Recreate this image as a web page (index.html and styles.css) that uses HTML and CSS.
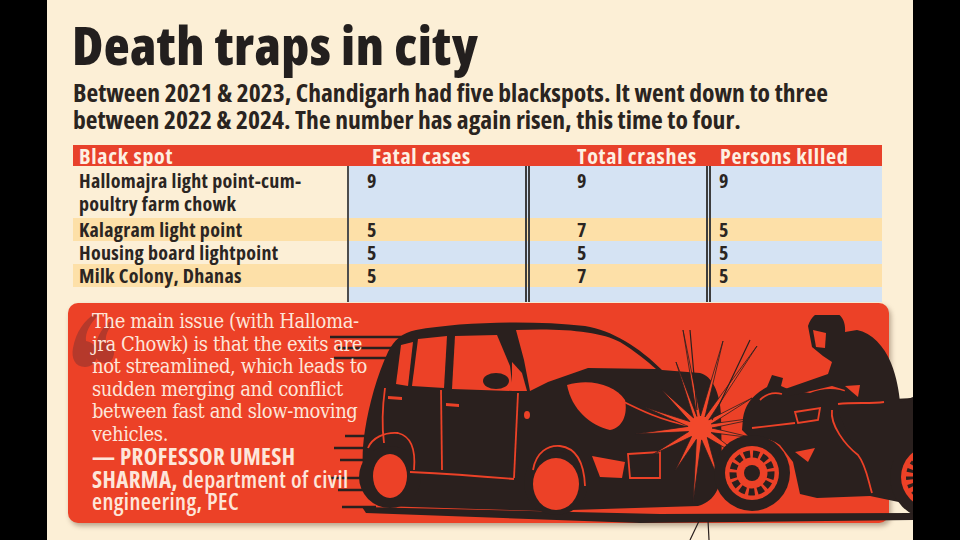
FILE: index.html
```html
<!DOCTYPE html>
<html lang="en">
<head>
<meta charset="utf-8">
<title>Death traps in city</title>
<link rel="stylesheet" href="styles.css">
</head>
<body>
<div class="frame">
  <div class="bar"></div>
  <main class="page">
    <h1 class="title">Death traps in city</h1>
    <p class="dek">Between 2021 &amp; 2023, Chandigarh had five blackspots. It went down to three<br>between 2022 &amp; 2024. The number has again risen, this time to four.</p>
    <div class="table">
      <div class="row head">
        <div class="c c1">Black spot</div>
        <div class="c c2">Fatal cases</div>
        <div class="c c3">Total crashes</div>
        <div class="c c4">Persons kIlled</div>
      </div>
      <div class="row odd tall">
        <div class="c c1">Hallomajra light point-cum-<br>poultry farm chowk</div>
        <div class="c c2">9</div>
        <div class="c c3">9</div>
        <div class="c c4">9</div>
      </div>
      <div class="row even">
        <div class="c c1">Kalagram light point</div>
        <div class="c c2">5</div>
        <div class="c c3">7</div>
        <div class="c c4">5</div>
      </div>
      <div class="row odd">
        <div class="c c1">Housing board lightpoint</div>
        <div class="c c2">5</div>
        <div class="c c3">5</div>
        <div class="c c4">5</div>
      </div>
      <div class="row even">
        <div class="c c1">Milk Colony, Dhanas</div>
        <div class="c c2">5</div>
        <div class="c c3">7</div>
        <div class="c c4">5</div>
      </div>
      <div class="row odd strip">
        <div class="c c1"></div>
        <div class="c c2"></div>
        <div class="c c3"></div>
        <div class="c c4"></div>
      </div>
    </div>
    <section class="box">
      <svg class="qmark" viewBox="0 0 45 60" width="45" height="60" aria-hidden="true">
        <path d="M14 58 C4 58 0 49 2 39 C5 23 13 11 25 4 L27 7 C19 14 14 24 15 32 C23 33 27 40 26 47 C25 54 20 58 14 58 Z"/>
        <path d="M34 54 C26 54 23 47 24 39 C26 27 32 17 41 11 L43 14 C37 19 34 27 35 33 C41 34 44 39 43 45 C42 51 39 54 34 54 Z"/>
      </svg>
      <svg class="art" viewBox="330 315 583 225" width="583" height="225" aria-hidden="true">
        <g stroke="#2a201e" stroke-width="2.5" fill="none">
          <path d="M330 337 H402 M338 348 H396 M334 358 H392 M345 436 H372 M334 448 H368 M340 460 H366 M330 478 H368 M338 490 H368 M342 507 H376"/>
        </g>
        <g fill="#2a201e">
          <path d="M362 507 L660 514 L913 513 L913 520 L640 523 L366 513 Z"/>
          <path d="M368 498 C362 480 361 455 365 430 C369 405 377 375 388 352 C394 340 402 333 416 330 C460 322 530 320 585 326 C612 330 640 348 662 370 L700 373 C712 376 720 392 721 415 L722 470 C720 492 712 502 698 506 L540 511 L380 506 Z"/>
          <circle cx="390" cy="477" r="31"/>
          <circle cx="556" cy="483" r="32"/>
        </g>
        <g fill="#ec4127">
          <ellipse cx="390" cy="476" rx="17" ry="22"/>
          <ellipse cx="556" cy="484" rx="23" ry="26"/>
          <path d="M401 345 L413 342 L408 386 L396 384 Z"/>
          <path d="M418 339 L447 336 L444 388 L412 386 Z"/>
          <path d="M455 336 L497 335 L510 366 L513 391 L452 389 Z"/>
          <path d="M512 362 L522 373 L527 391 L512 391 Z"/>
          <path d="M516 330 C560 328 600 331 620 342 C635 351 648 362 656 369 L588 368 L548 382 L530 391 L524 360 Z"/>
          <path d="M567 385 C590 378 615 385 625 400 C628 415 622 428 610 430 C590 425 572 410 567 385 Z"/>
          <path d="M592 456 L625 462 L622 478 L600 477 Z"/>
          <ellipse cx="527" cy="415" rx="3" ry="4"/>
          <path d="M388 396 L402 397 L402 400 L388 399 Z"/>
          <path d="M446 403 L459 404 L459 407 L446 406 Z"/>
        </g>
        <ellipse cx="496" cy="381" rx="13" ry="8" fill="#2a201e"/>
        <g stroke="#ec4127" stroke-width="1.8" fill="none">
          <path d="M441 390 L442 470"/>
          <path d="M518 393 L514 478"/>
          <path d="M410 472 C450 474 490 477 514 479"/>
          <path d="M368 448 C372 438 384 432 398 433 C410 436 416 448 414 470"/>
          <path d="M533 470 C536 452 548 445 560 446 C576 448 584 462 585 486"/>
          <path d="M385 388 C382 410 382 428 384 443"/>
          <path d="M628 454 L660 452 L660 478 L630 478 Z"/>
          <path d="M620 400 C640 410 660 420 690 426"/>
        </g>
        <polygon fill="#f2482b" stroke="#2a201e" stroke-width="0.8" points="683,330 700.5,416 723,341 705,417 757,346 708.8,419.9 752,398 711.3,423.9 769,416 712,428 754,438 711.1,432.6 749,462 707.3,437.5 719,480 701.6,439.9 693,503 696.4,439.4 675,471 691.5,436.5 652,455 688.6,431.6 635,434 688.1,426.4 644,407 689.9,421.6 661,389 693.6,417.9 676,362 696.9,416.4"/>
        <g stroke="#2a201e" stroke-width="1.2" fill="none">
          <path d="M690 330 L697 410 M750 340 L712 420 M708 520 L709 540 M700 519 L690 540"/>
        </g>
        <g fill="#2a201e">
          <path d="M772 375 L783 378 L781 386 L790 390 L810 393 C820 389 830 388 840 390 L873 400 L913 398 L913 505 L870 496 L817 498 L800 494 L793 462 L780 445 C770 438 758 436 750 438 L742 430 L743 418 C745 405 752 395 767 387 Z"/>
          <circle cx="752" cy="473" r="38"/>
          <circle cx="932" cy="477" r="42"/>
          <path d="M812 347 L808 326 C812 313 822 310 830 311 C840 312 846 320 845 332 L857 330 C872 333 884 346 891 363 C897 378 899 392 900 402 L913 397 L913 460 L860 460 L838 412 L845 390 L832 386 L790 396 L785 389 L828 374 L832 362 L823 356 Z"/>
        </g>
        <g fill="#ec4127">
          <circle cx="752" cy="473" r="27"/>
          <circle cx="932" cy="477" r="31"/>
          <path d="M813 330 L826 333 L825 348 L816 347 Z"/>
          <path d="M845 386 L860 385 L858 397 Z"/>
          <path d="M795 452 L815 448 L808 462 Z"/>
        </g>
        <circle cx="752" cy="473" r="19" fill="none" stroke="#2a201e" stroke-width="7" stroke-dasharray="6 3"/>
        <circle cx="752" cy="473" r="8" fill="#2a201e"/>
        <circle cx="932" cy="477" r="21" fill="none" stroke="#2a201e" stroke-width="10" stroke-dasharray="3 4"/>
        <g stroke="#ec4127" stroke-width="1.8" fill="none">
          <path d="M832 410 C830 425 845 445 858 455 C866 465 868 480 872 493"/>
          <path d="M752 428 L795 423"/>
          <path d="M795 412 L820 408 L818 420 L798 423 Z"/>
          <path d="M838 404 C855 402 870 404 884 402"/>
          <path d="M760 400 C766 394 774 392 782 394"/>
        </g>
      </svg>
      <blockquote class="q">
        <p class="quote">The main issue (with Halloma-<br>jra Chowk) is that the exits are<br>not streamlined, which leads to<br>sudden merging and conflict<br>between fast and slow-moving<br>vehicles.</p>
        <p class="by">— PROFESSOR UMESH<br>SHARMA, <span class="light">department of civil<br>engineering, PEC</span></p>
      </blockquote>
    </section>
  </main>
  <div class="bar"></div>
</div>
</body>
</html>
```

FILE: styles.css
```css
* {
  box-sizing: border-box;
  margin: 0;
  padding: 0;
}

body {
  width: 960px;
  height: 540px;
  overflow: hidden;
  background: #000;
}

.frame {
  display: flex;
  height: 540px;
}

.bar {
  flex: none;
  width: 47px;
  background: #000;
}

.page {
  flex: none;
  width: 866px;
  height: 540px;
  background: #fcefd6;
  padding-left: 21px;
  overflow: hidden;
}

.title {
  margin: 19px 0 0 4px;
  font-family: "Open Sans", sans-serif;
  font-weight: 800;
  font-size: 53.5px;
  line-height: 51px;
  font-stretch: 75%;
  letter-spacing: 0.4px;
  color: #231f1e;
  white-space: nowrap;
}

.dek {
  margin: 9px 0 0 5px;
  font-family: "Open Sans", sans-serif;
  font-weight: 700;
  font-size: 25.6px;
  line-height: 27px;
  font-stretch: 75%;
  color: #2a2420;
  white-space: nowrap;
}

.table {
  margin: 12px 0 0 5px;
  width: 809px;
}

.row {
  display: grid;
  grid-template-columns: 274px 178px 181px 176px;
  font-family: "Open Sans", sans-serif;
  font-weight: 700;
  font-size: 20px;
  line-height: 23px;
  font-stretch: 75%;
  letter-spacing: 0.3px;
  color: #2b2522;
  white-space: nowrap;
}

.c1 {
  padding-left: 6px;
}

.row .c2 {
  border-left: 2px solid #4d4d4d;
  padding-left: 18px;
}

.row .c3 {
  border-left: 5px double #3d3d3d;
  padding-left: 47px;
}

.row .c4 {
  border-left: 5px double #3d3d3d;
  padding-left: 8px;
}

.head {
  height: 21px;
  background: #e8412b;
  color: #fdf0e2;
  font-size: 22px;
  line-height: 21px;
  letter-spacing: 0.7px;
}

.head .c2 {
  border: none;
  padding-left: 25px;
}

.head .c3 {
  border: none;
  padding-left: 52px;
}

.head .c4 {
  border: none;
  padding-left: 14px;
}

.odd .c2,
.odd .c3,
.odd .c4 {
  background: #d5e3f3;
}

.even {
  background: #fde0a8;
}

.tall .c {
  padding-top: 3px;
  padding-bottom: 3px;
}

.strip {
  height: 15px;
}

.box {
  position: relative;
  margin-top: 1px;
  width: 821px;
  height: 220px;
  background: #ec4127;
  border-radius: 10px;
  box-shadow: 2px 3px 5px rgba(60, 30, 10, 0.35);
}

.qmark {
  position: absolute;
  left: 3px;
  top: 6px;
  fill: #b5392b;
}

.art {
  position: absolute;
  left: 262px;
  top: 12px;
}

.q {
  position: relative;
  padding: 7px 0 0 24px;
  color: #fde6da;
}

.quote {
  font-family: "DejaVu Serif Condensed", serif;
  font-size: 20px;
  line-height: 22.5px;
  letter-spacing: -0.4px;
  white-space: nowrap;
}

.by {
  font-family: "Open Sans", sans-serif;
  font-weight: 700;
  font-size: 23px;
  line-height: 22.5px;
  font-stretch: 75%;
  letter-spacing: 0.4px;
  white-space: nowrap;
}

.by .light {
  font-weight: 600;
}
```
